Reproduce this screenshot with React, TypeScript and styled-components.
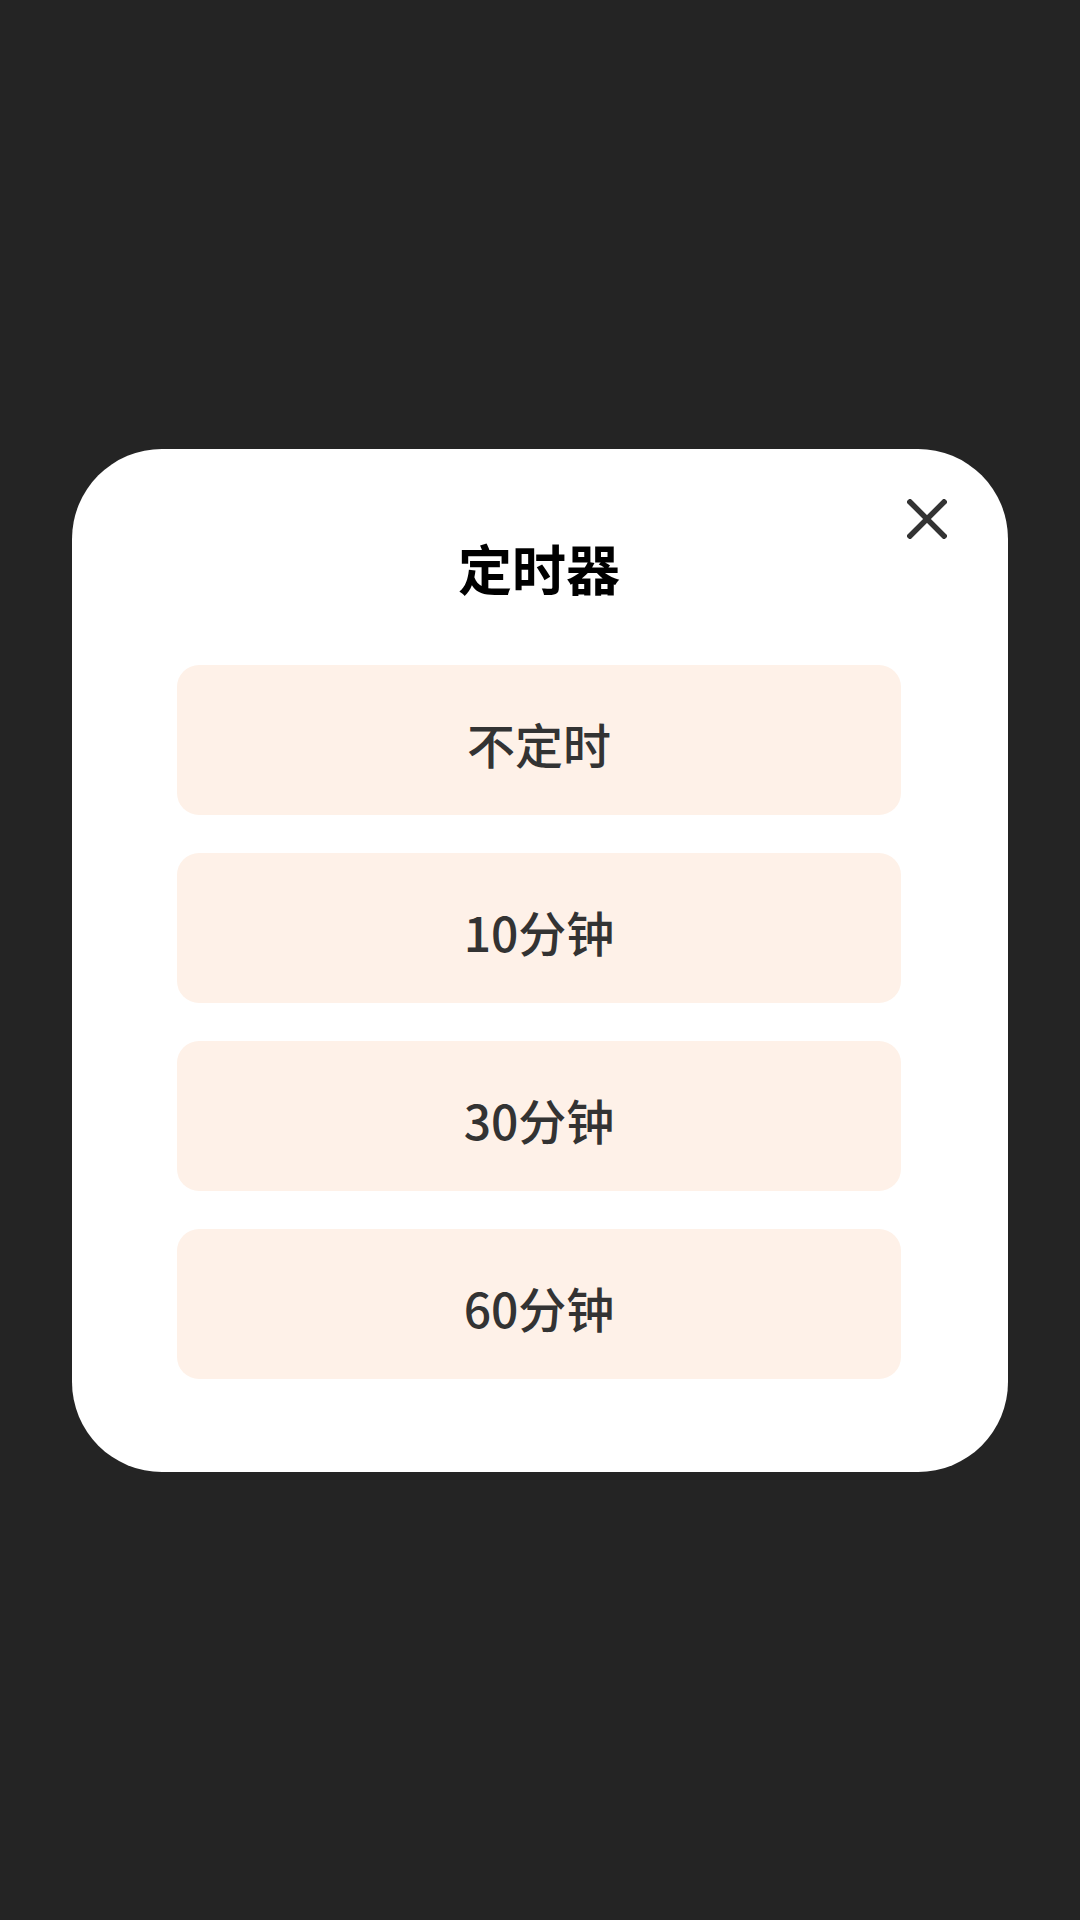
import React, { useState } from 'react';
import styled, { createGlobalStyle } from 'styled-components';

const GlobalStyle = createGlobalStyle`
    html, body {
        margin: 0;
        padding: 0;
        background: #242424;
    }
    body {
        font-family: "Noto Sans CJK SC", "Noto Sans", sans-serif;
    }
`;

const Backdrop = styled.div`
    min-height: 1920px;
    display: flex;
    align-items: center;
    justify-content: center;
    background: #242424;
`;

const Dialog = styled.div`
    position: relative;
    box-sizing: border-box;
    width: 936px;
    padding: 86px 107px 93px 105px;
    background: #ffffff;
    border-radius: 90px;
    display: flex;
    flex-direction: column;
    align-items: stretch;
`;

const Title = styled.h2`
    margin: 0 0 65px;
    text-align: center;
    font-size: 54px;
    line-height: 65px;
    font-weight: 700;
    color: #000000;
`;

const CloseButton = styled.button`
    position: absolute;
    top: 48px;
    right: 59px;
    width: 44px;
    height: 44px;
    padding: 0;
    border: none;
    background: transparent;
    display: flex;
    align-items: center;
    justify-content: center;
    cursor: pointer;
`;

const OptionList = styled.div`
    display: flex;
    flex-direction: column;
    gap: 38px;
`;

const Option = styled.button<{ active?: boolean }>`
    height: 150px;
    border: none;
    border-radius: 22px;
    background: ${props => props.active ? '#fde3d1' : '#fef1e8'};
    color: #333333;
    font-family: "Noto Sans CJK SC", "Noto Sans", sans-serif;
    font-size: 48px;
    font-weight: 500;
    line-height: 1;
    padding: 6px 0 0;
    display: flex;
    align-items: center;
    justify-content: center;
    cursor: pointer;
`;

const options = ['不定时', '10分钟', '30分钟', '60分钟'];

const App: React.FC = () => {
    const [selected, setSelected] = useState<number | null>(null);

    return (
        <>
            <GlobalStyle />
            <Backdrop>
                <Dialog>
                    <CloseButton aria-label="关闭">
                        <svg width="40" height="40" viewBox="0 0 40 40">
                            <path d="M3 3 L37 37 M37 3 L3 37" stroke="#333333" strokeWidth="5.5" strokeLinecap="square" />
                        </svg>
                    </CloseButton>
                    <Title>定时器</Title>
                    <OptionList>
                        {options.map((label, i) => (
                            <Option key={label} active={selected === i} onClick={() => setSelected(i)}>
                                {label}
                            </Option>
                        ))}
                    </OptionList>
                </Dialog>
            </Backdrop>
        </>
    );
};

export default App;
